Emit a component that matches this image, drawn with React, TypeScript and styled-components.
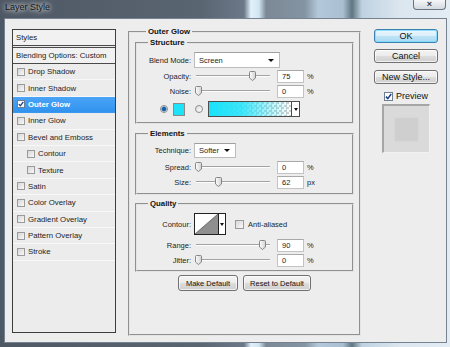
import React, { FC } from "react";
import styled, { createGlobalStyle } from "styled-components";

const GlobalStyle = createGlobalStyle`
  html, body {
    margin: 0;
    padding: 0;
  }
  body {
    font-family: "Liberation Sans", Arial, sans-serif;
    color: #1d1d1d;
  }
`;

const Frame = styled.div`
  width: 450px;
  height: 347px;
  overflow: hidden;
  display: flex;
  flex-direction: column;
  background: linear-gradient(
    to right,
    #4e5864 0px,
    #5a6572 200px,
    #6b7888 244px,
    #e2f1fb 251px,
    #d0e4f2 259px,
    #7c8896 266px,
    #8494a3 305px,
    #b3c8da 318px,
    #a9c0d2 343px,
    #5f7580 352px,
    #bfd2e1 362px,
    #dbe6ef 400px,
    #e3ecf3 450px
  );
`;

const TitleBar = styled.div`
  height: 18px;
  display: flex;
  justify-content: space-between;
  align-items: flex-start;
  padding: 0 4px 0 5px;
`;

const Title = styled.span`
  font-size: 9px;
  line-height: 15px;
  color: #151515;
  text-shadow: 0 0 4px #fff, 0 0 7px rgba(255, 255, 255, 0.7);
`;

const CloseBtn = styled.div`
  width: 33px;
  height: 10px;
  box-sizing: border-box;
  border: 1px solid #6b7480;
  border-top: none;
  border-radius: 0 0 4px 4px;
  background: linear-gradient(#f4f6f8, #d3dae1);
  display: flex;
  align-items: center;
  justify-content: center;
  font-size: 9px;
  font-weight: bold;
  line-height: 9px;
  color: #3a3f45;
`;

const Client = styled.div`
  margin: 0 3px 0 4px;
  height: 325px;
  box-sizing: border-box;
  background: #ededed;
  border: 1px solid #76828f;
  display: flex;
  align-items: flex-start;
  padding: 10px 8px 0 7px;
`;

/* ---------- left styles list ---------- */

const StylesPanel = styled.div`
  width: 104px;
  height: 304px;
  box-sizing: border-box;
  border: 1px solid #3e3e3e;
  background: #ececec;
  margin-right: 12px;
  font-size: 7.8px;
`;

const PanelHead = styled.div<{ $gap?: boolean }>`
  height: ${(p) => (p.$gap ? 17 : 16)}px;
  box-sizing: border-box;
  display: flex;
  align-items: center;
  padding-left: 3px;
  border-bottom: 1px solid #4a4a4a;
  border-top: ${(p) => (p.$gap ? "1px solid #4a4a4a" : "none")};
  margin-top: ${(p) => (p.$gap ? 1 : 0)}px;
  background: #f1f1f1;
`;

const StyleRow = styled.div<{ $active?: boolean; $indent?: boolean }>`
  height: 16.4px;
  box-sizing: border-box;
  display: flex;
  align-items: center;
  gap: 3px;
  padding-left: ${(p) => (p.$indent ? 14 : 4)}px;
  border-bottom: 1px solid ${(p) => (p.$active ? "#3a97f0" : "#f8f8f8")};
  background: ${(p) => (p.$active ? "linear-gradient(#4aa4f7, #3193ee)" : "transparent")};
  color: ${(p) => (p.$active ? "#fff" : "#1d1d1d")};
  font-weight: ${(p) => (p.$active ? "bold" : "normal")};
`;

const Box = styled.span<{ $on?: boolean }>`
  width: 8px;
  height: 8px;
  box-sizing: border-box;
  flex: none;
  border: 1px solid ${(p) => (p.$on ? "#6f7f93" : "#9a9a9a")};
  background: ${(p) => (p.$on ? "#fdfdfd" : "linear-gradient(135deg, #d6d6d6, #f9f9f9)")};
  display: flex;
  align-items: center;
  justify-content: center;
`;

const CheckBox: FC<{ checked?: boolean; size?: number }> = ({ checked, size = 8 }) => (
  <Box $on={checked} style={size !== 8 ? { width: size, height: size } : undefined}>
    {checked && (
      <svg width={size - 2} height={size - 2} viewBox="0 0 6 6">
        <path d="M0.8 3.1 L2.4 4.8 L5.3 0.9" fill="none" stroke="#1f3f86" strokeWidth="1.3" />
      </svg>
    )}
  </Box>
);

const styleItems = [
  { label: "Drop Shadow" },
  { label: "Inner Shadow" },
  { label: "Outer Glow", checked: true, active: true },
  { label: "Inner Glow" },
  { label: "Bevel and Emboss" },
  { label: "Contour", indent: true },
  { label: "Texture", indent: true },
  { label: "Satin" },
  { label: "Color Overlay" },
  { label: "Gradient Overlay" },
  { label: "Pattern Overlay" },
  { label: "Stroke" },
];

/* ---------- middle settings ---------- */

const Group = styled.fieldset<{ $h?: number; $mt?: number }>`
  margin: ${(p) => p.$mt ?? 0}px 0 0 0;
  padding: 0 5px;
  border: 2px groove #e4e4e4;
  min-width: 0;
  box-sizing: border-box;
  ${(p) => (p.$h ? `height: ${p.$h}px;` : "")}
`;

const SubGroup = styled.fieldset<{ $mt?: number; $pt: number; $pb: number }>`
  margin: ${(p) => p.$mt ?? 0}px 0 0 0;
  padding: ${(p) => p.$pt}px 0 ${(p) => p.$pb}px 0;
  border: 2px groove #e4e4e4;
  min-width: 0;
  display: flex;
  flex-direction: column;
`;

const Legend = styled.legend`
  margin-left: 11px;
  padding: 0 2px;
  font-size: 7.8px;
  line-height: 11px;
  font-weight: bold;
  color: #111;
`;

const MainCol = styled.div`
  width: 233px;
  margin-top: -3px;
`;

const Row = styled.div<{ $h: number; $mt?: number }>`
  height: ${(p) => p.$h}px;
  margin-top: ${(p) => p.$mt ?? 0}px;
  display: grid;
  grid-template-columns: 54px 80px 27px auto;
  column-gap: 3px;
  align-items: center;
  font-size: 7.5px;
`;

const Label = styled.span`
  text-align: right;
  white-space: nowrap;
`;

const Unit = styled.span`
  font-size: 7.5px;
`;

const Field = styled.div`
  height: 13px;
  box-sizing: border-box;
  border: 1px solid #c3c3c3;
  border-top-color: #a9a9a9;
  background: #fff;
  padding-left: 4px;
  display: flex;
  align-items: center;
`;

const SelectBox = styled.div<{ $w: number; $h: number }>`
  grid-column: 2 / span 3;
  width: ${(p) => p.$w}px;
  height: ${(p) => p.$h}px;
  box-sizing: border-box;
  border: 1px solid #bcbcbc;
  border-top-color: #9f9f9f;
  background: #fff;
  display: flex;
  align-items: center;
  justify-content: space-between;
  padding: 0 5px 0 4px;
`;

const Arrow = styled.span`
  width: 0;
  height: 0;
  border-left: 3px solid transparent;
  border-right: 3px solid transparent;
  border-top: 3px solid #111;
`;

const SliderBox = styled.div`
  position: relative;
  height: 14px;
  display: flex;
  align-items: center;
`;

const Track = styled.div`
  flex: 1;
  margin: 0 4px 0 2px;
  border-top: 1px solid #a2a2a2;
  border-bottom: 1px solid #fdfdfd;
`;

const Thumb = styled.svg`
  position: absolute;
  top: 2px;
`;

const Slider: FC<{ pos: number }> = ({ pos }) => (
  <SliderBox>
    <Track />
    <Thumb width="7" height="10" viewBox="0 0 7 10" style={{ left: `${0.5 + pos * 0.72}px` }}>
      <defs>
        <linearGradient id="thumbFill" x1="0" x2="1">
          <stop offset="0" stopColor="#fdfdfd" />
          <stop offset="1" stopColor="#d2d2d2" />
        </linearGradient>
      </defs>
      <path
        d="M1.5 0.5 H5.5 Q6.5 0.5 6.5 1.5 V7 L3.5 9.5 L0.5 7 V1.5 Q0.5 0.5 1.5 0.5 Z"
        fill="url(#thumbFill)"
        stroke="#7c7c7c"
        strokeWidth="0.9"
      />
    </Thumb>
  </SliderBox>
);

const SliderRow: FC<{ label: string; pos: number; value: string; unit: string; mt?: number }> = ({
  label,
  pos,
  value,
  unit,
  mt,
}) => (
  <Row $h={14} $mt={mt}>
    <Label>{label}</Label>
    <Slider pos={pos} />
    <Field>{value}</Field>
    <Unit>{unit}</Unit>
  </Row>
);

const ColorRow = styled.div`
  height: 16px;
  margin-top: 3px;
  margin-left: 23px;
  display: flex;
  align-items: center;
`;

const Radio = styled.span<{ $on?: boolean }>`
  width: 8px;
  height: 8px;
  box-sizing: border-box;
  border-radius: 50%;
  border: 1px solid #8d8d8d;
  background: ${(p) =>
    p.$on ? "radial-gradient(circle, #1a5ea8 0 1.8px, #6fa7d8 2.4px, #f4f4f4 3px)" : "linear-gradient(135deg, #dedede, #fdfdfd)"};
`;

const Swatch = styled.span`
  width: 12px;
  height: 13px;
  box-sizing: border-box;
  border: 1px solid #8a8a8a;
  background: #1de3f9;
  margin: 0 10px 0 5px;
`;

const GradientBar = styled.div`
  margin-left: 5px;
  display: flex;
  height: 16px;
  box-sizing: border-box;
  border: 1px solid #4e4e4e;
`;

const GradientFill = styled.span`
  width: 82px;
  background:
    linear-gradient(to right, #19e2fa 0%, rgba(40, 228, 250, 0.9) 40%, rgba(40, 228, 250, 0.35) 75%, rgba(40, 228, 250, 0) 100%),
    conic-gradient(#cfcfcf 25%, #fff 0 50%, #cfcfcf 0 75%, #fff 0) 0 0 / 5px 5px;
`;

const DropPart = styled.span`
  width: 7px;
  border-left: 1px solid #4e4e4e;
  background: #fff;
  display: flex;
  align-items: center;
  justify-content: center;
`;

const SmallArrow = styled(Arrow)`
  border-left-width: 2px;
  border-right-width: 2px;
`;

const ContourCell = styled.div`
  grid-column: 2 / span 3;
  display: flex;
  align-items: center;
`;

const ContourPicker = styled.div`
  width: 32px;
  height: 22px;
  box-sizing: border-box;
  border: 1px solid #222;
  display: flex;
  background: #fff;
`;

const ContourPreview = styled.svg`
  display: block;
  border-right: 1px solid #222;
`;

const ContourDrop = styled.span`
  flex: 1;
  display: flex;
  align-items: center;
  justify-content: center;
`;

const AntiAlias = styled.span`
  margin-left: 9px;
  display: flex;
  align-items: center;
  gap: 4px;
  font-size: 7.5px;
`;

const ButtonBar = styled.div`
  margin-top: 3px;
  display: flex;
  justify-content: center;
  gap: 5px;
`;

const Button = styled.button<{ $w: number; $h?: number; $primary?: boolean; $fs?: number }>`
  width: ${(p) => p.$w}px;
  height: ${(p) => p.$h ?? 16}px;
  padding: 0;
  box-sizing: border-box;
  font-family: "Liberation Sans", Arial, sans-serif;
  font-size: ${(p) => p.$fs ?? 7.5}px;
  color: #111;
  border-radius: 3px;
  border: 1px solid ${(p) => (p.$primary ? "#3c7fb1" : "#707070")};
  background: ${(p) =>
    p.$primary
      ? "linear-gradient(#ebf6fd 0%, #d9effb 50%, #bfe3f6 51%, #a9d9f2 100%)"
      : "linear-gradient(#f4f4f4 0%, #ebebeb 50%, #dddddd 51%, #cfcfcf 100%)"};
  box-shadow: inset 0 0 0 1px ${(p) => (p.$primary ? "rgba(120, 220, 250, 0.8)" : "rgba(255, 255, 255, 0.7)")};
`;

/* ---------- right column ---------- */

const SideCol = styled.div`
  width: 64px;
  margin-left: 13px;
  display: flex;
  flex-direction: column;
  align-items: center;
`;

const PreviewToggle = styled.label`
  margin-top: 7px;
  display: flex;
  align-items: center;
  gap: 3px;
  font-size: 9px;
  color: #111;
`;

const PreviewBox = styled.div`
  margin-top: 3px;
  width: 48px;
  height: 49px;
  box-sizing: border-box;
  border-top: 2px solid #a6a6a6;
  border-left: 2px solid #a6a6a6;
  border-right: 1px solid #f2f2f2;
  border-bottom: 1px solid #f2f2f2;
  background: #dadada;
  display: flex;
  align-items: center;
  justify-content: center;
`;

const PreviewSquare = styled.div`
  width: 23px;
  height: 23px;
  background: #cfcfcf;
  box-shadow: 0 0 2px #d3d3d3;
`;

const App: FC = () => (
  <>
    <GlobalStyle />
    <Frame>
      <TitleBar>
        <Title>Layer Style</Title>
        <CloseBtn>×</CloseBtn>
      </TitleBar>
      <Client>
        <StylesPanel>
          <PanelHead>Styles</PanelHead>
          <PanelHead $gap>Blending Options: Custom</PanelHead>
          {styleItems.map((item) => (
            <StyleRow key={item.label} $active={item.active} $indent={item.indent}>
              <CheckBox checked={item.checked} />
              {item.label}
            </StyleRow>
          ))}
        </StylesPanel>

        <MainCol>
          <Group $h={310}>
            <Legend>Outer Glow</Legend>
            <SubGroup $pt={4} $pb={5}>
              <Legend>Structure</Legend>
              <Row $h={16}>
                <Label>Blend Mode:</Label>
                <SelectBox $w={86} $h={16}>
                  Screen
                  <Arrow />
                </SelectBox>
              </Row>
              <SliderRow label="Opacity:" pos={75} value="75" unit="%" mt={1} />
              <SliderRow label="Noise:" pos={0} value="0" unit="%" mt={1} />
              <ColorRow>
                <Radio $on />
                <Swatch />
                <Radio />
                <GradientBar>
                  <GradientFill />
                  <DropPart>
                    <SmallArrow />
                  </DropPart>
                </GradientBar>
              </ColorRow>
            </SubGroup>

            <SubGroup $mt={4} $pt={4} $pb={4}>
              <Legend>Elements</Legend>
              <Row $h={15}>
                <Label>Technique:</Label>
                <SelectBox $w={42} $h={15}>
                  Softer
                  <Arrow />
                </SelectBox>
              </Row>
              <SliderRow label="Spread:" pos={0} value="0" unit="%" mt={2} />
              <SliderRow label="Size:" pos={29} value="62" unit="px" mt={1} />
            </SubGroup>

            <SubGroup $mt={3} $pt={4} $pb={3}>
              <Legend>Quality</Legend>
              <Row $h={22}>
                <Label>Contour:</Label>
                <ContourCell>
                  <ContourPicker>
                    <ContourPreview width="23" height="20" viewBox="0 0 23 20">
                      <polygon points="0,20 23,0 23,20" fill="#8f8f8f" />
                      <line x1="0" y1="20" x2="23" y2="0" stroke="#555" strokeWidth="0.8" />
                    </ContourPreview>
                    <ContourDrop>
                      <SmallArrow />
                    </ContourDrop>
                  </ContourPicker>
                  <AntiAlias>
                    <CheckBox size={9} />
                    Anti-aliased
                  </AntiAlias>
                </ContourCell>
              </Row>
              <SliderRow label="Range:" pos={90} value="90" unit="%" mt={3} />
              <SliderRow label="Jitter:" pos={0} value="0" unit="%" mt={1} />
            </SubGroup>

            <ButtonBar>
              <Button $w={60}>Make Default</Button>
              <Button $w={68}>Reset to Default</Button>
            </ButtonBar>
          </Group>
        </MainCol>

        <SideCol>
          <Button $w={64} $h={14} $primary $fs={9}>
            OK
          </Button>
          <Button $w={64} $h={14} $fs={9} style={{ marginTop: 6 }}>
            Cancel
          </Button>
          <Button $w={64} $h={14} $fs={9} style={{ marginTop: 7 }}>
            New Style...
          </Button>
          <PreviewToggle>
            <CheckBox checked size={9} />
            Preview
          </PreviewToggle>
          <PreviewBox>
            <PreviewSquare />
          </PreviewBox>
        </SideCol>
      </Client>
    </Frame>
  </>
);

export default App;
